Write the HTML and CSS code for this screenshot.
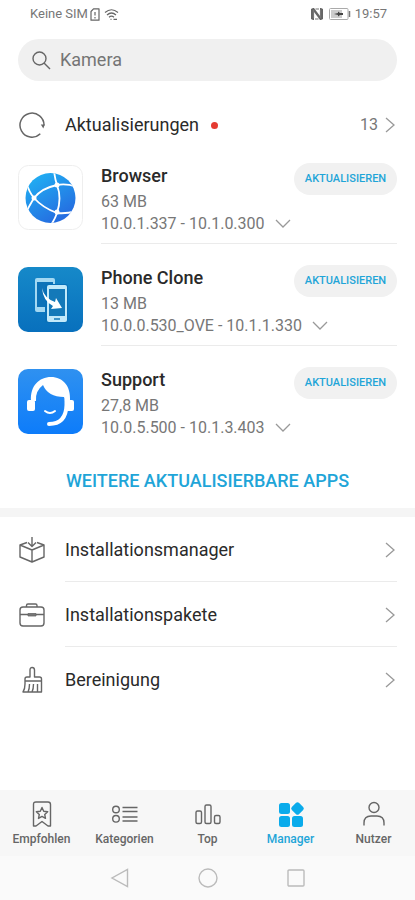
FILE: index.html
```html
<!DOCTYPE html>
<html lang="de">
<head>
<meta charset="utf-8">
<meta name="viewport" content="width=device-width, initial-scale=1">
<title>Manager</title>
<link rel="stylesheet" href="styles.css">
</head>
<body>
<svg class="defs" width="0" height="0" aria-hidden="true">
  <defs>
    <symbol id="right" viewBox="0 0 10 18"><path d="M1 2l8 7-8 7"/></symbol>
    <symbol id="down" viewBox="0 0 16 10"><path d="M1 1l7 7 7-7"/></symbol>
  </defs>
</svg>
<header class="status">
  <span>Keine SIM</span>
  <svg class="line" width="10" height="13" viewBox="0 0 10 13"><path d="M3.500.8H9v11.400H1V3.500z M5 4v3.500 M5 9v1.400"/></svg>
  <svg class="line wifi" width="15" height="13" viewBox="0 0 15 13"><path d="M1 4.500q6.500-5.500 13 0M3 7q4.500-4 9 0M5 9.300q2.500-2.200 5 0M6.500 11.300h1M9.500 11.300h3.500"/></svg>
  <span class="grow"></span>
  <svg width="12" height="12" viewBox="0 0 12 12"><path fill="#666" d="M0 1l2-1h1l6 8V0h1l2 1v10l-2 1H9L3 4v8H2l-2-1z"/><path d="M2.500 2v8M9.500 2v8M4.500 1H8M4 11h3.500" stroke="#777" stroke-width="1.200"/></svg>
  <svg class="battery" width="22" height="12" viewBox="0 0 22 12"><rect x=".5" y=".5" width="18.500" height="11" rx="1" fill="#fff" stroke="#aaa"/><path d="M2 2h11v8H2z" fill="#ccc"/><path d="M20.500 3v6" stroke="#777" stroke-width="1.500"/><path d="M5 6l4-1V3.500L11 5h3v2h-3L9 8.500V7z" fill="#444"/></svg>
  <span>19:57</span>
</header>
<main>
  <label class="search">
    <svg class="line" width="19" height="19" viewBox="0 0 19 19"><circle cx="7.500" cy="7.500" r="6.500"/><path d="M12 12l6 6"/></svg>
    <input type="search" aria-label="Suche" placeholder="Kamera">
  </label>
  <a class="updates" href="#updates">
    <svg class="line" width="28" height="28" viewBox="0 0 28 28"><path d="M22.300 22.800A12 12 0 1 1 26 14.500" stroke-width="1.500"/><path d="M22.800 13.500h4l-1.500 4z" fill="#666" stroke="none"/></svg>
    <span>Aktualisierungen</span><i class="dot"></i><span class="count">13</span>
    <svg class="chev" width="10" height="18"><use href="#right"/></svg>
  </a>
  <section id="updates">
    <article class="app">
      <svg class="logo" width="65" height="65" viewBox="0 0 65 65">
        <defs><linearGradient id="globe" x2=".6" y2="1"><stop stop-color="#20b7f5"/><stop offset="1" stop-color="#256ce0"/></linearGradient><clipPath id="disc"><circle cx="32.500" cy="33" r="25"/></clipPath></defs>
        <rect x=".5" y=".5" width="64" height="64" rx="10" fill="#fff" stroke="#eee"/><circle cx="32.500" cy="33" r="25" fill="url(#globe)"/>
        <g clip-path="url(#disc)" fill="none" stroke="#fff" stroke-width="1.800"><path d="M36 6Q37 14 39 20Q44 33 39 48Q37 54 33 60M7 50Q11 41 16 33Q24 23 39 20Q48 18 59 22M8 17Q11 27 16 33Q25 43 39 48Q48 49 59 46"/></g>
        <circle cx="39" cy="20" r="2.500" fill="#fff"/><circle cx="16" cy="33" r="2.500" fill="#fff"/><circle cx="39" cy="47" r="2.500" fill="#fff"/>
      </svg>
      <div class="info"><div class="text"><h2>Browser</h2><p>63 MB</p><p>10.0.1.337 - 10.1.0.300 <svg class="chev down" width="16" height="10"><use href="#down"/></svg></p></div><button class="pill">AKTUALISIEREN</button></div>
    </article>
    <article class="app">
      <svg class="logo" width="65" height="65" viewBox="0 0 65 65">
        <defs><linearGradient id="blue" x2="0" y2="1"><stop stop-color="#1689c9"/><stop offset="1" stop-color="#0870bd"/></linearGradient></defs>
        <rect width="65" height="65" rx="10" fill="url(#blue)"/>
        <rect x="17" y="11" width="20" height="34" rx="2" fill="#a3d8f2"/><path d="M19 15h16v25H19z" fill="#0d72b8"/>
        <rect x="27" y="17" width="23" height="39" rx="3" fill="#0870b8"/><rect x="29" y="18" width="20" height="37" rx="2" fill="#c2e9fa"/><path d="M31 22h16v27H31z" fill="#1479b9"/><path d="M36 52h6" stroke="#1479b9" stroke-width="1.500"/>
        <path d="M24 21Q26 31 37 35L38 31 44 41 33 42 35 39Q25 34 24 21z" fill="#fff"/>
      </svg>
      <div class="info"><div class="text"><h2>Phone Clone</h2><p>13 MB</p><p>10.0.0.530_OVE - 10.1.1.330 <svg class="chev down" width="16" height="10"><use href="#down"/></svg></p></div><button class="pill">AKTUALISIEREN</button></div>
    </article>
    <article class="app">
      <svg class="logo" width="65" height="65" viewBox="0 0 65 65">
        <defs><linearGradient id="sky" x2="0" y2="1"><stop stop-color="#2f91f0"/><stop offset="1" stop-color="#0d7cfa"/></linearGradient></defs>
        <rect width="65" height="65" rx="10" fill="url(#sky)"/>
        <path d="M13 32C12 17 21 8 33 8S53 17 52 32L47 32 46 28Q30 28 25 16 17 22 18 32z" fill="#fff"/>
        <rect x="9" y="31" width="8" height="11" rx="2" fill="#fff"/><rect x="48" y="31" width="8" height="11" rx="2" fill="#fff"/>
        <path d="M48.500 31V36Q48 55 31 55" fill="none" stroke="#fff" stroke-width="4" stroke-linecap="round"/><path d="M27 42Q32 46 37 42" fill="none" stroke="#fff" stroke-width="2" stroke-linecap="round"/>
      </svg>
      <div class="info"><div class="text"><h2>Support</h2><p>27,8 MB</p><p>10.0.5.500 - 10.1.3.403 <svg class="chev down" width="16" height="10"><use href="#down"/></svg></p></div><button class="pill">AKTUALISIEREN</button></div>
    </article>
    <button class="more">WEITERE AKTUALISIERBARE APPS</button>
  </section>
  <nav class="tools" aria-label="Werkzeuge">
    <a href="#install"><svg class="line" width="28" height="28" viewBox="0 0 28 28"><path d="M9 6.500L2 9v12l12 5 12-5V9l-7-2.500M2 9l12 5 12-5M14 14v12M14 1v9M10 6.500l4 4 4-4"/></svg><span>Installationsmanager<svg class="chev" width="10" height="18"><use href="#right"/></svg></span></a>
    <a href="#packages"><svg class="line" width="28" height="28" viewBox="0 0 28 28"><rect x="2" y="6" width="24" height="19" rx="3"/><path d="M8.500 6V4.500Q8.500 3 10 3h7.500Q19 3 19 4.500V6M2 13.500h8M18 13.500h8"/><rect x="10" y="12.500" width="8" height="2.500" fill="#777" stroke-width=".8"/></svg><span>Installationspakete<svg class="chev" width="10" height="18"><use href="#right"/></svg></span></a>
    <a href="#clean"><svg class="line" width="28" height="28" viewBox="0 0 28 28"><path d="M12 11V4q0-2.500 2.200-2.500T16.500 4v7h5q2 0 2 2v13H5q2-3 2-8v-5q0-2 2-2zM7 15h16.500M11.500 18q0 5-1.500 8M15.500 18q0 5-1.500 8M19.500 18v8"/></svg><span>Bereinigung<svg class="chev" width="10" height="18"><use href="#right"/></svg></span></a>
  </nav>
</main>
<footer>
  <nav class="tabs" aria-label="Hauptnavigation">
    <a href="#1"><svg class="line" width="28" height="28" viewBox="0 0 28 28"><path d="M5.500 4.500q0-2.500 2.500-2.500h12q2.500 0 2.500 2.500V26H20l-6-4.500L8 26H5.500z"/><path d="M14 7.500l1.700 3.700 4 .5-3 2.700.8 4-3.500-2-3.500 2 .8-4-3-2.700 4-.5z"/></svg>Empfohlen</a>
    <a href="#2"><svg class="line" width="28" height="28" viewBox="0 0 28 28"><circle cx="5" cy="9.500" r="3.300"/><circle cx="5" cy="18.800" r="3.300"/><path d="M11.500 7.500H26.500M11.500 11.500H26.500M11.500 17H26.500M11.500 21H26.500"/></svg>Kategorien</a>
    <a href="#3"><svg class="line" width="28" height="28" viewBox="0 0 28 28"><rect x="2" y="11" width="5.500" height="12.500" rx="1.500"/><rect x="11" y="5" width="6" height="18.500" rx="1.500"/><rect x="20.500" y="15.500" width="5.500" height="8" rx="1.500"/></svg>Top</a>
    <a class="active" href="#4" aria-current="page"><svg width="28" height="28" viewBox="0 0 28 28" fill="#0aabeb"><rect x="2" y="3" width="11" height="11" rx="2.500"/><rect x="2" y="16" width="11" height="11" rx="2.500"/><rect x="15" y="16" width="11" height="11" rx="2.500"/><rect x="15.500" y="3.500" width="10" height="10" rx="2" transform="rotate(45 20.500 8.500)"/></svg>Manager</a>
    <a href="#5"><svg class="line" width="28" height="28" viewBox="0 0 28 28"><circle cx="14" cy="7.500" r="5"/><path d="M4 25.500V23q0-7 7-7h6q7 0 7 7v2.500"/></svg>Nutzer</a>
  </nav>
  <div class="system">
    <button aria-label="Zurück"><svg width="20" height="20" viewBox="0 0 20 20"><path d="M17.500 1.500v17L2 10z"/></svg></button>
    <button aria-label="Startseite"><svg width="20" height="20" viewBox="0 0 20 20"><circle cx="10" cy="10" r="9"/></svg></button>
    <button aria-label="Letzte Apps"><svg width="20" height="20" viewBox="0 0 20 20"><rect x="2" y="2" width="16" height="16" rx="1"/></svg></button>
  </div>
</footer>
</body>
</html>
```
FILE: styles.css
```css
* { box-sizing: border-box; }
body {
  margin: 0;
  min-height: 100vh;
  display: flex;
  flex-direction: column;
  background: #fff;
  color: #2a2a2a;
  font: 18px/24px Roboto, sans-serif;
}
a { color: inherit; text-decoration: none; }
button { border: 0; padding: 0; background: none; font: inherit; }
svg { flex: none; }
h2, p { margin: 0; }
.defs { position: absolute; }
.line { fill: none; stroke: #666; stroke-width: 1.400; stroke-linejoin: round; }
.chev { fill: none; stroke: #999; stroke-width: 1.300; }
.grow { flex: 1; }
.status {
  display: flex;
  align-items: center;
  height: 28px;
  padding: 0 28px 0 30px;
  color: #777;
  font-size: 13px;
}
.status .line { margin-left: 2px; stroke-width: 1.200; }
.status .wifi { margin-left: 4px; }
.battery { margin: 0 4px 0 6px; }
main { flex: 1; }
.search {
  display: flex;
  align-items: center;
  gap: 9px;
  height: 42px;
  margin: 11px 18px 0;
  padding: 0 14px;
  border-radius: 21px;
  background: #f0f0f0;
}
.search input {
  flex: 1;
  min-width: 0;
  padding: 0;
  border: 0;
  outline: 0;
  background: none;
  font: inherit;
}
.search input::placeholder { color: #757575; opacity: 1; }
.updates {
  display: flex;
  align-items: center;
  height: 62px;
  margin: 13px 20px 0 18px;
}
.updates .line { margin-right: 19px; }
.dot {
  width: 7px;
  height: 7px;
  margin-left: 12px;
  border-radius: 50%;
  background: #e53b32;
}
.count { margin: 0 7px 0 auto; color: #777; font-size: 16px; }
.app { display: flex; height: 102px; margin: 0 18px; }
.updates + section .app:first-child { margin-top: -14px; }
.logo { margin: 23px 18px 0 0; }
.info {
  flex: 1;
  display: flex;
  justify-content: space-between;
  padding-top: 21px;
  border-bottom: 1px solid #ebebeb;
}
.app:nth-child(3) .info { border: 0; }
.text { padding-top: 1px; white-space: nowrap; }
.text h2 { margin-bottom: 3px; font-size: 18px; font-weight: 500; }
.text p { color: #777; font-size: 16px; line-height: 22px; }
.down { margin-left: 6px; }
.pill {
  width: 103px;
  height: 32px;
  margin-left: -40px;
  border-radius: 16px;
  background: #f1f1f1;
  color: #1fa5d8;
  font-size: 11px;
  font-weight: 500;
}
.more {
  display: block;
  width: 100%;
  height: 60px;
  padding-top: 6px;
  color: #1fa5d8;
  font-size: 18px;
  font-weight: 500;
}
.tools { border-top: 9px solid #f5f5f5; }
.tools a {
  display: flex;
  align-items: center;
  gap: 19px;
  height: 65px;
  margin: 0 18px;
}
.tools span {
  flex: 1;
  display: flex;
  align-items: center;
  justify-content: space-between;
  height: 65px;
  padding: 1px 2px 0 0;
  border-bottom: 1px solid #ebebeb;
}
.tools a:last-child span { border: 0; }
footer { background: #fafafa; }
.tabs {
  display: grid;
  grid-template-columns: repeat(5, 1fr);
  height: 66px;
  background: #f7f7f7;
  color: #666;
  font-size: 12px;
  font-weight: 500;
  line-height: 16px;
}
.tabs a {
  display: flex;
  flex-direction: column;
  align-items: center;
  gap: 3px;
  padding-top: 10px;
}
.tabs .active { color: #1fa5d8; }
.system {
  display: flex;
  justify-content: center;
  gap: 68px;
  height: 44px;
}
.system svg { display: block; fill: none; stroke: #bbb; stroke-width: 1.400; }
```
